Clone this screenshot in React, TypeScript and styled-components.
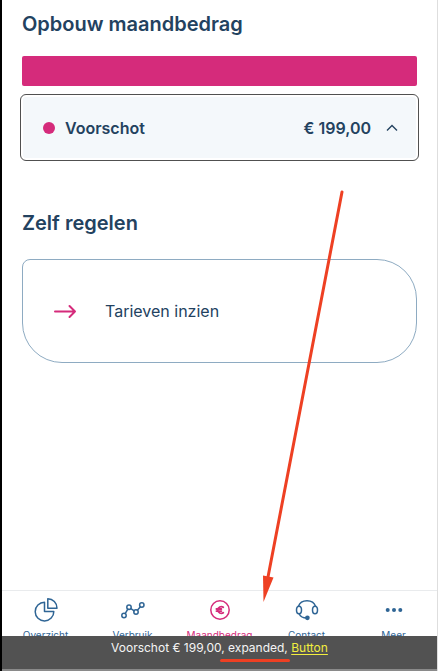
import React from "react";
import styled, { createGlobalStyle } from "styled-components";

const navy = "#23425f";
const blue = "#2f6595";
const pink = "#d52b7b";
const red = "#ee4023";

const GlobalStyle = createGlobalStyle`
  *, *::before, *::after { box-sizing: border-box; }
  body {
    margin: 0;
    background: #fff;
    color: ${navy};
    font-family: Inter, "Noto Sans", sans-serif;
  }
  button { font: inherit; color: inherit; }
`;

const Screen = styled.div`
  position: relative;
  display: flex;
  flex-direction: column;
  min-height: 100vh;
  margin-right: 1px;
  border-left: 2px solid #000;
  border-right: 1px solid #dedede;
`;

const Content = styled.main`
  flex: 1;
  padding: 10px 18px 24px;
`;

const Section = styled.section`
  margin-bottom: 48px;
`;

const Heading = styled.h2`
  margin: 0 2px;
  font-size: 20px;
  line-height: 28px;
  font-weight: 600;
`;

const Bar = styled.div`
  height: 30px;
  margin: 18px 2px 8px;
  border-radius: 2px;
  background: ${pink};
`;

const Accordion = styled.button`
  display: flex;
  align-items: center;
  width: 100%;
  height: 67px;
  padding: 0 20px;
  border: 1px solid #505050;
  border-radius: 6px;
  background: #f4f8fb;
  box-shadow: inset 0 0 0 2px #fff;
  font-size: 16px;
  line-height: 24px;
  font-weight: 600;
`;

const Dot = styled.span`
  width: 12px;
  height: 12px;
  margin: 0 10px 0 2px;
  border-radius: 50%;
  background: ${pink};
`;

const Amount = styled.span`
  margin-left: auto;
  margin-right: 15px;
`;

const ActionCard = styled.button`
  display: flex;
  align-items: center;
  gap: 28px;
  width: calc(100% - 4px);
  height: 104px;
  margin: 22px 2px 0;
  padding: 0 30px;
  border: 1px solid #8eabc2;
  border-radius: 8px 40px 40px 40px;
  background: #fff;
  font-size: 16px;
  line-height: 24px;
`;

const Nav = styled.nav`
  display: grid;
  grid-template-columns: repeat(5, 1fr);
  height: 46px;
  overflow: hidden;
  border-top: 1px solid #e9ebed;
`;

const Tab = styled.a<{ $active?: boolean }>`
  display: flex;
  flex-direction: column;
  align-items: center;
  gap: 4px;
  padding-top: 6px;
  color: ${(p) => (p.$active ? pink : blue)};
  font-size: 10px;
  line-height: 16px;
  text-decoration: none;
`;

const Caption = styled.div`
  height: 35px;
  border-bottom: 2px solid #8a8a8a;
  background: #525252;
  color: #f5f5f5;
  font-size: 12px;
  line-height: 24px;
  text-align: center;
`;

const Marked = styled.span`
  position: relative;
  &::after {
    content: "";
    position: absolute;
    left: -8px;
    right: -2px;
    bottom: -7px;
    height: 3px;
    border-radius: 2px;
    background: ${red};
  }
`;

const CaptionLink = styled.a`
  color: #f2ee3f;
  text-underline-offset: 2px;
`;

const Pointer = styled.svg`
  position: absolute;
  left: 258px;
  bottom: 66px;
  pointer-events: none;
`;

const iconProps = {
  width: 26,
  height: 26,
  viewBox: "0 0 26 26",
  fill: "none",
  stroke: "currentColor",
  strokeWidth: 1.5,
  strokeLinejoin: "round" as const,
  strokeLinecap: "round" as const,
  "aria-hidden": true,
};

const PieIcon = () => (
  <svg {...iconProps}>
    <path d="M11.500 5.3A9.300 9.300 0 1 0 20.800 14.400H11.500z" />
    <path d="M14.800 1.800V11.200H24A9.300 9.300 0 0 0 14.800 1.800z" />
  </svg>
);

const GraphIcon = () => (
  <svg {...iconProps}>
    <circle cx="4" cy="18.5" r="2.2" />
    <circle cx="9" cy="10.3" r="2.2" />
    <circle cx="16" cy="15" r="2.2" />
    <circle cx="21.8" cy="8" r="2.2" />
    <path d="M5.2 16.6l2.6-4.4M10.9 11.6l3.3 2.2M17.4 13.3l3-3.6" />
  </svg>
);

const EuroIcon = () => (
  <svg {...iconProps}>
    <circle cx="13" cy="13" r="9.2" />
    <path strokeWidth="1.8" d="M16.3 10.3A3.6 3.6 0 0 0 10.7 13a3.6 3.6 0 0 0 5.6 2.7M9.4 12h5M9.4 14.1h5" />
  </svg>
);

const HeadsetIcon = () => (
  <svg {...iconProps}>
    <path d="M4.500 9.200a8.800 7.500 0 0 1 17 0M5.200 17c1.200 2.500 3.600 4 7.400 4" />
    <ellipse cx="5" cy="13" rx="2.500" ry="3.800" />
    <ellipse cx="21" cy="13" rx="2.500" ry="3.800" />
    <circle cx="13.400" cy="20.800" r="1.600" fill="currentColor" />
  </svg>
);

const MoreIcon = () => (
  <svg {...iconProps} fill="currentColor" stroke="none">
    <circle cx="6.7" cy="13" r="2" />
    <circle cx="13" cy="13" r="2" />
    <circle cx="19.3" cy="13" r="2" />
  </svg>
);

const tabs = [
  { label: "Overzicht", Icon: PieIcon },
  { label: "Verbruik", Icon: GraphIcon },
  { label: "Maandbedrag", Icon: EuroIcon, active: true },
  { label: "Contact", Icon: HeadsetIcon },
  { label: "Meer", Icon: MoreIcon },
];

export default function App() {
  return (
    <>
      <GlobalStyle />
      <Screen>
        <Content>
          <Section>
            <Heading>Opbouw maandbedrag</Heading>
            <Bar />
            <Accordion type="button" aria-expanded="true">
              <Dot />
              <span>Voorschot</span>
              <Amount>€ 199,00</Amount>
              <svg width="12" height="8" viewBox="0 0 12 8" fill="none" stroke="currentColor" strokeWidth="1.4" aria-hidden="true">
                <path d="M1 6.5l5-5 5 5" />
              </svg>
            </Accordion>
          </Section>
          <Section>
            <Heading>Zelf regelen</Heading>
            <ActionCard type="button">
              <svg width="24" height="16" viewBox="0 0 24 16" fill="none" stroke={pink} strokeWidth="2" strokeLinecap="round" strokeLinejoin="round" aria-hidden="true">
                <path d="M2 8.5h20M16.5 3l5.5 5.5-5.5 5.5" />
              </svg>
              <span>Tarieven inzien</span>
            </ActionCard>
          </Section>
        </Content>
        <Nav>
          {tabs.map(({ label, Icon, active }) => (
            <Tab key={label} href="#" $active={active} aria-current={active ? "page" : undefined}>
              <Icon />
              <span>{label}</span>
            </Tab>
          ))}
        </Nav>
        <Caption>
          Voorschot € 199,00, <Marked>expanded,</Marked> <CaptionLink href="#">Button</CaptionLink>
        </Caption>
        <Pointer width="90" height="418" viewBox="0 0 90 418" aria-hidden="true">
          <path d="M82 5L8 390" stroke={red} strokeWidth="3" strokeLinecap="round" fill="none" />
          <path d="M3 388.500l10.500 2L3.500 415z" fill={red} />
        </Pointer>
      </Screen>
    </>
  );
}
